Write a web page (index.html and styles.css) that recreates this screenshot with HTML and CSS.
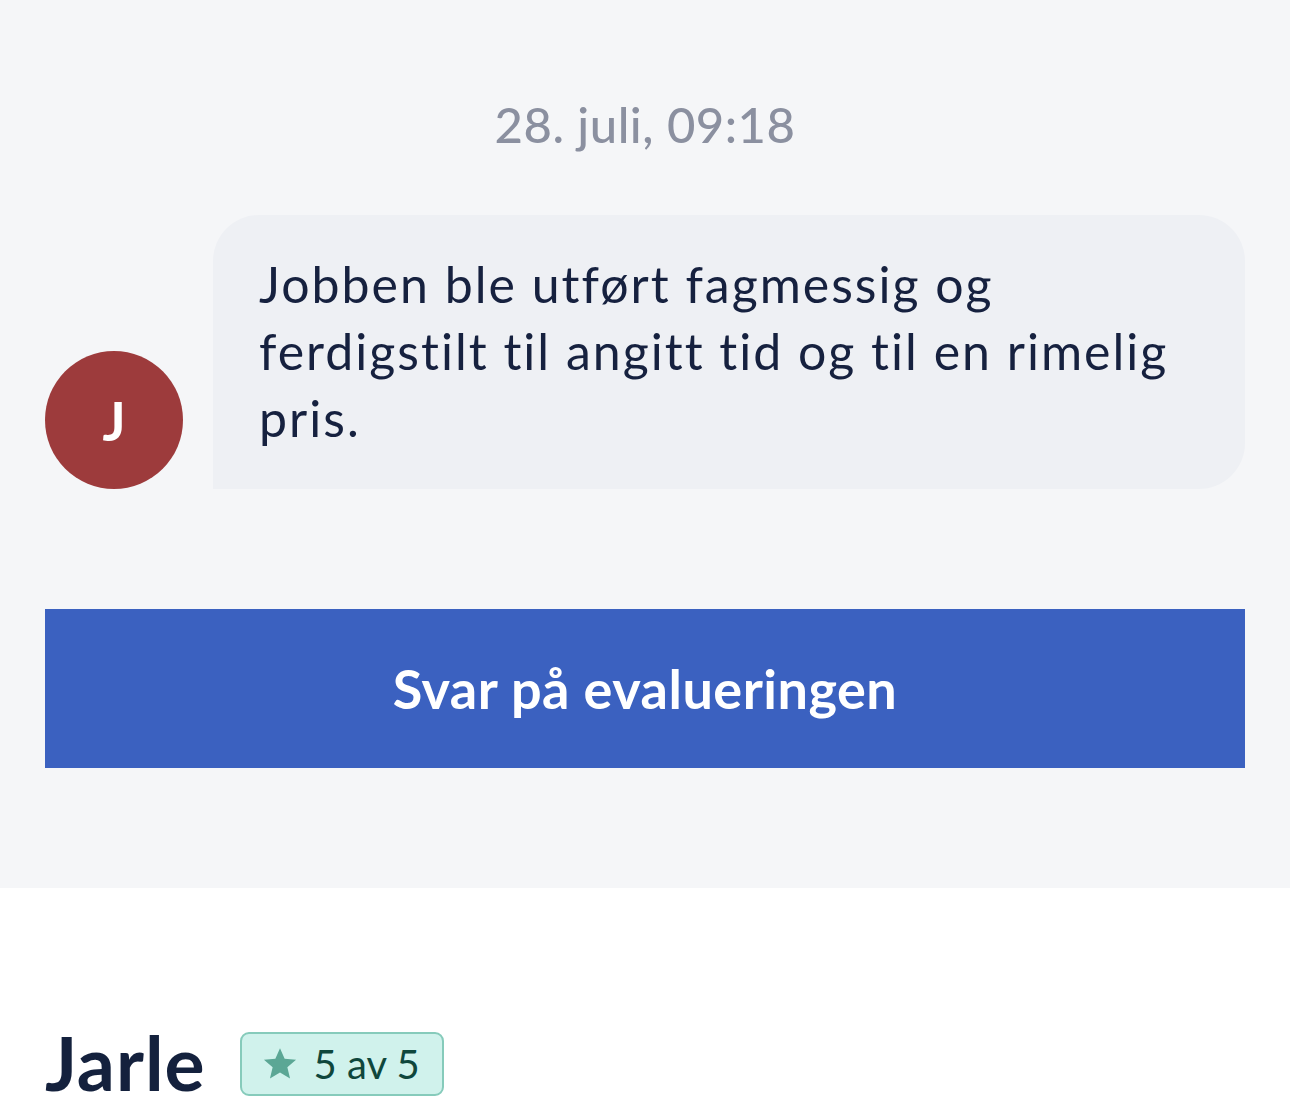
FILE: index.html
```html
<!DOCTYPE html>
<html lang="no">
<head>
<meta charset="utf-8">
<link rel="stylesheet" href="styles.css">
</head>
<body>
<section class="thread">
  <div class="date">28. juli, 09:18</div>
  <div class="message">
    <div class="avatar">J</div>
    <div class="bubble">Jobben ble utført fagmessig og ferdigstilt til angitt tid og til en rimelig pris.</div>
  </div>
  <button class="reply">Svar på evalueringen</button>
</section>
<section class="review">
  <h2 class="name">Jarle</h2>
  <span class="badge"><svg class="star" viewBox="0 0 24 24" width="36" height="36"><path d="M12 1.5l3.1 7 7.6.6-5.8 5 1.8 7.5L12 17.6l-6.7 4 1.8-7.5-5.8-5 7.6-.6z" fill="#5ba795"/></svg>5 av 5</span>
</section>
</body>
</html>
```
FILE: styles.css
```css
html, body {
  margin: 0;
  padding: 0;
  background: #ffffff;
  font-family: "Lato", "Open Sans", sans-serif;
}
.thread {
  background: #f5f6f8;
  padding: 96px 45px 120px;
  display: flex;
  flex-direction: column;
}
.date {
  text-align: center;
  color: #8b90a0;
  font-size: 49px;
  line-height: 56px;
  font-weight: 500;
  letter-spacing: 0.5px;
}
.message {
  margin-top: 63px;
  display: flex;
  align-items: flex-end;
  gap: 30px;
}
.avatar {
  flex: 0 0 138px;
  height: 138px;
  border-radius: 50%;
  background: #9d3b3c;
  color: #fff;
  font-size: 54px;
  font-weight: 700;
  display: flex;
  align-items: center;
  justify-content: center;
}
.bubble {
  flex: 1;
  background: #eef0f4;
  border-radius: 46px 46px 46px 0;
  padding: 36px 46px 37px 46px;
  color: #16213f;
  font-size: 50px;
  line-height: 67px;
  letter-spacing: 2px;
}
.reply {
  margin-top: 120px;
  height: 159px;
  border: 0;
  background: #3b61c0;
  color: #fff;
  font-family: inherit;
  font-size: 54px;
  font-weight: 700;
  letter-spacing: 0.5px;
}
.review {
  padding: 134px 45px 20px;
  display: flex;
  align-items: center;
  gap: 34px;
}
.name {
  margin: 0;
  font-size: 75px;
  line-height: 80px;
  font-weight: 700;
  color: #14213d;
  letter-spacing: 1px;
}
.badge {
  display: inline-flex;
  align-items: center;
  gap: 16px;
  height: 60px;
  margin-top: 4px;
  padding: 0 22px 0 20px;
  border: 2px solid #86cbbb;
  border-radius: 9px;
  background: #d0f2ec;
  color: #0f473c;
  font-size: 40px;
}
```
